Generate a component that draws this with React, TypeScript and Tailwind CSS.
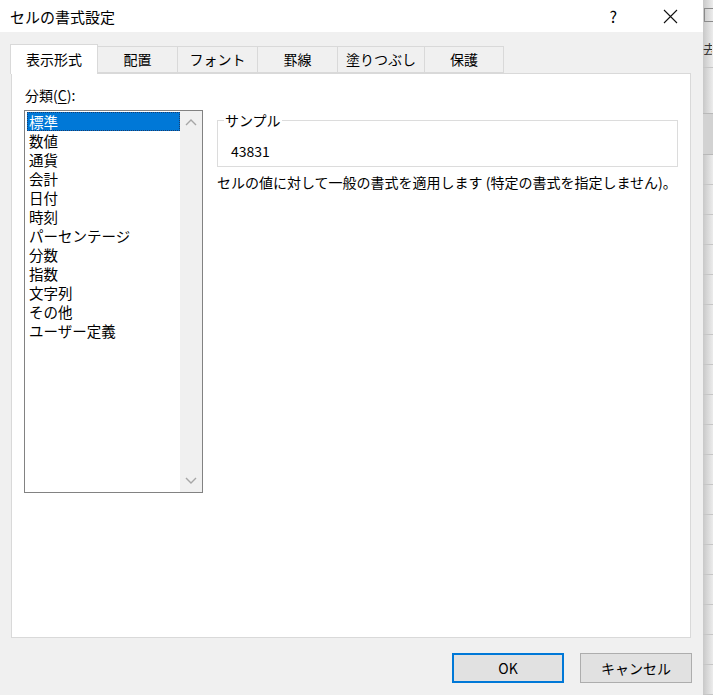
import React from 'react';

const font = { fontFamily: '"Noto Sans CJK JP", "Noto Sans", "Liberation Sans", sans-serif' };

const tabs = ['表示形式', '配置', 'フォント', '罫線', '塗りつぶし', '保護'];
const tabWidths = ['w-[88px]', 'w-[80px]', 'w-[80px]', 'w-[80px]', 'w-[87px]', 'w-[79px]'];

const categories = [
  '標準',
  '数値',
  '通貨',
  '会計',
  '日付',
  '時刻',
  'パーセンテージ',
  '分数',
  '指数',
  '文字列',
  'その他',
  'ユーザー定義',
];

function Chevron({ up }: { up?: boolean }) {
  return (
    <svg width="12" height="8" viewBox="0 0 12 8" className="text-[#a6a6a6]">
      <path
        d={up ? 'M1 7 L6 2 L11 7' : 'M1 1 L6 6 L11 1'}
        fill="none"
        stroke="currentColor"
        strokeWidth="1.4"
      />
    </svg>
  );
}

function ExcelStrip() {
  // the worksheet that peeks out to the right of the dialog
  const rows = Array.from({ length: 17 });
  return (
    <div className="w-[10px] h-[695px] flex flex-col bg-[#e6e6e6] bg-gradient-to-r from-[#c8c8c8] to-[#ececec] overflow-hidden">
      <div className="h-[30px] flex items-center">
        <div className="w-[10px] h-[14px] border border-[#8a8a8a] border-r-0 ml-[1px]"></div>
      </div>
      <div className="h-[38px] border-b border-[#c6c6c6] flex items-center overflow-hidden">
        <span className="text-[13px] text-[#333] leading-none w-[9px] overflow-hidden whitespace-nowrap">去</span>
      </div>
      <div className="h-[45px]"></div>
      <div className="h-[42px] bg-[#d2d2d2] border-y border-[#b8b8b8]"></div>
      <div className="h-[30px] border-b border-[#c6c6c6]"></div>
      {rows.map((_, i) => (
        <div key={i} className="h-[30px] border-b border-[#c6c6c6] shrink-0"></div>
      ))}
    </div>
  );
}

export default function App() {
  return (
    <div className="w-[713px] h-[695px] flex bg-[#f0f0f0] overflow-hidden text-black" style={font}>
      <div className="w-[703px] h-[695px] flex flex-col">
        {/* title bar */}
        <div className="h-[32px] bg-white flex items-center pl-[10px] shrink-0">
          <span className="text-[15px] leading-none">セルの書式設定</span>
          <span className="ml-auto text-[16px] leading-none mr-[46px]">?</span>
          <svg width="15" height="15" viewBox="0 0 15 15" className="mr-[25px]">
            <path d="M1 1 L14 14 M14 1 L1 14" stroke="#111" strokeWidth="1.1" />
          </svg>
        </div>

        {/* body */}
        <div className="flex-1 flex flex-col pl-[10px] pr-[11px] pt-[11px]">
          <div className="flex items-end h-[30px] relative z-10">
            {tabs.map((t, i) =>
              i === 0 ? (
                <div
                  key={t}
                  className={`${tabWidths[i]} h-[30px] bg-white border border-b-0 border-[#d9d9d9] flex items-center justify-center text-[14px] -mb-px`}
                >
                  {t}
                </div>
              ) : (
                <div
                  key={t}
                  className={`${tabWidths[i]} h-[27px] bg-[#f0f0f0] border border-l-0 border-[#d9d9d9] flex items-center justify-center text-[14px]`}
                >
                  {t}
                </div>
              )
            )}
          </div>

          <div className="w-[680px] h-[565px] bg-white border border-[#d9d9d9] ml-px flex pl-[12px] pt-[11px]">
            <div className="flex flex-col w-[179px]">
              <div className="text-[14px] leading-[20px] pl-px">
                分類(<span className="underline underline-offset-2">C</span>):
              </div>
              <div className="mt-[5px] w-[179px] h-[383px] border border-[#828282] flex">
                <div className="flex-1 flex flex-col pt-px pl-[2px]">
                  {categories.map((c, i) => (
                    <div
                      key={c}
                      className={`h-[19px] leading-[19px] text-[14.5px] pl-[2px] whitespace-nowrap ${
                        i === 0 ? 'bg-[#0078d7] text-white outline outline-1 outline-dotted outline-[#1b3d6d] -outline-offset-1' : ''
                      }`}
                    >
                      {c}
                    </div>
                  ))}
                </div>
                <div className="w-[22px] bg-[#f0f0f0] flex flex-col items-center justify-between py-[7px]">
                  <Chevron up />
                  <Chevron />
                </div>
              </div>
            </div>

            <div className="flex flex-col ml-[14px] pt-[28px]">
              <fieldset className="w-[461px] h-[55px] border border-[#dcdcdc] pl-[6px] -mt-[1px]">
                <legend className="text-[14px] leading-[16px] px-px">サンプル</legend>
                <div className="text-[14px] leading-[20px] pl-[7px] mt-[13px]">43831</div>
              </fieldset>
              <div className="text-[14px] leading-[20px] mt-[5px] whitespace-nowrap">
                セルの値に対して一般の書式を適用します (特定の書式を指定しません)。
              </div>
            </div>
          </div>

          <div className="flex justify-end gap-[16px] mt-[15px]">
            <button className="w-[112px] h-[30px] bg-[#e1e1e1] border-2 border-[#0078d7] text-[14px]">
              OK
            </button>
            <button className="w-[112px] h-[30px] bg-[#e1e1e1] border border-[#adadad] text-[14px]">
              キャンセル
            </button>
          </div>
        </div>
      </div>
      <ExcelStrip />
    </div>
  );
}
